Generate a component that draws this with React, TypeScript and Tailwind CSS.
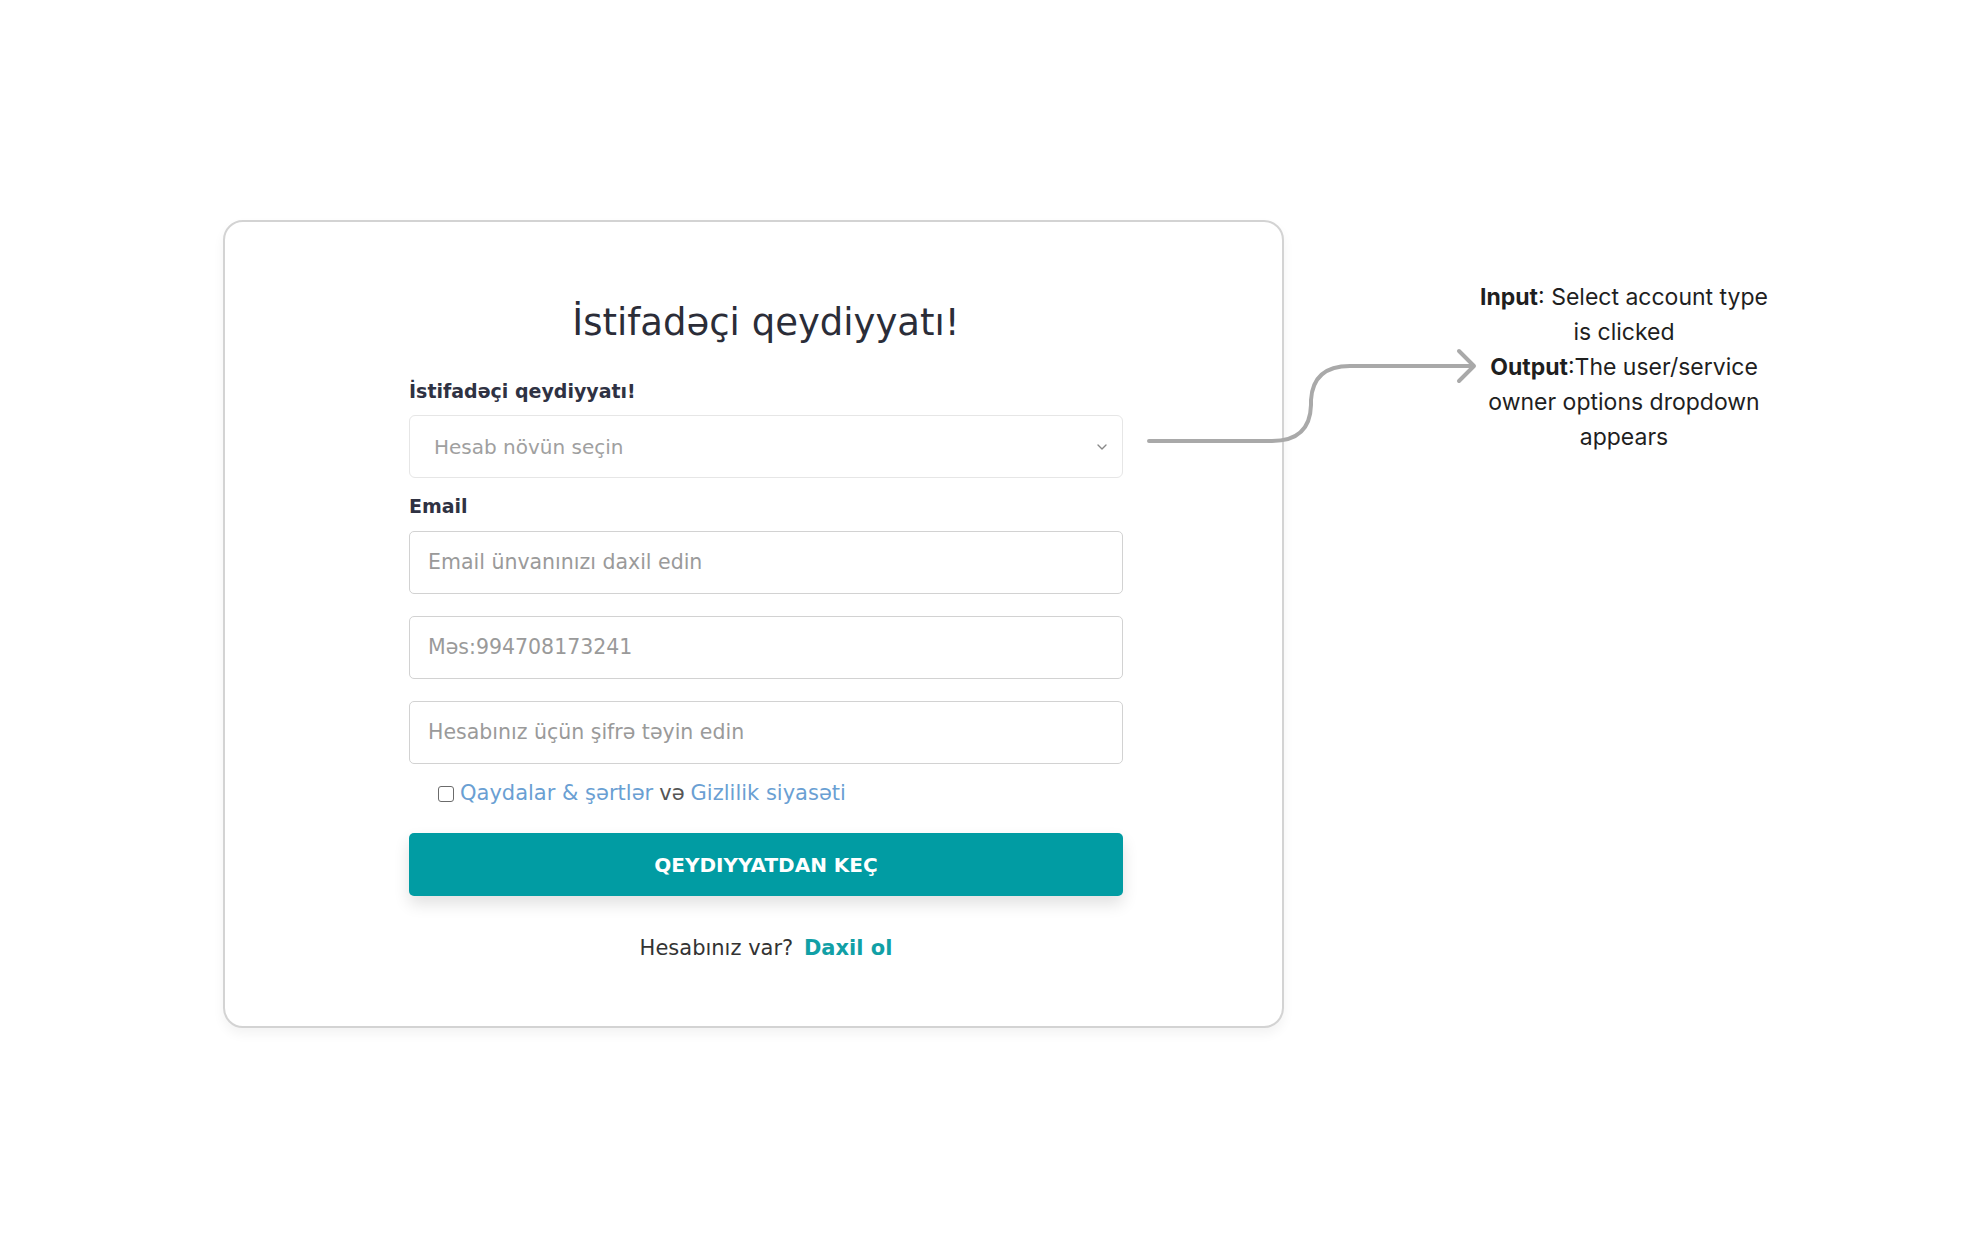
import { ChevronDown } from "lucide-react";

function Field({ placeholder }: { placeholder: string }) {
  return (
    <div className="mt-[22px] h-[63px] w-full rounded-[5px] border border-[#d2d2d2] bg-white flex items-center px-[18px] text-[20.5px] text-[#9a9a9a]">
      {placeholder}
    </div>
  );
}

export default function App() {
  return (
    <div className="relative w-full h-[1254px] bg-white font-['DejaVu_Sans',sans-serif]">
      <div className="flex items-start pl-[223px] pt-[220px]">
        {/* Registration card */}
        <div className="w-[1061px] h-[808px] shrink-0 rounded-[20px] border-2 border-[#d3d3d3] bg-white shadow-[0_6px_12px_rgba(0,0,0,0.05)] pl-[184px] pt-[77px]">
          <div className="w-[714px] flex flex-col">
            <h1 className="text-center text-[37px] leading-[48px] text-[#2b2d38]">
              İstifadəçi qeydiyyatı!
            </h1>

            <label className="mt-[32px] text-[19px] leading-[24px] font-semibold text-[#2f3243]">
              İstifadəçi qeydiyyatı!
            </label>
            <div className="mt-[12px] h-[63px] w-full rounded-[6px] border border-[#e6e6e6] flex items-center justify-between pl-[24px] pr-[12px] text-[20px] text-[#a0a0a0]">
              <span>Hesab növün seçin</span>
              <ChevronDown className="w-4 h-4 text-[#888]" strokeWidth={2} />
            </div>

            <label className="mt-[16px] text-[19px] leading-[24px] font-semibold text-[#2f3243]">
              Email
            </label>
            <div className="mt-[13px] h-[63px] w-full rounded-[5px] border border-[#d2d2d2] bg-white flex items-center px-[18px] text-[20.5px] text-[#9a9a9a]">
              Email ünvanınızı daxil edin
            </div>
            <Field placeholder="Məs:994708173241" />
            <Field placeholder="Hesabınız üçün şifrə təyin edin" />

            <div className="mt-[18px] h-[24px] flex items-center gap-[6px] pl-[29px] text-[21px]">
              <span className="w-[16px] h-[16px] rounded-[3px] border-[1.5px] border-[#6b6b6b] bg-white" />
              <span className="text-[#6a9fd3]">Qaydalar &amp; şərtlər</span>
              <span className="text-[#555]">və</span>
              <span className="text-[#6a9fd3]">Gizlilik siyasəti</span>
            </div>

            <button className="mt-[27px] h-[63px] w-full rounded-[5px] bg-[#019ca3] text-white text-[20px] font-semibold shadow-[0_8px_16px_rgba(0,0,0,0.12)]">
              QEYDIYYATDAN KEÇ
            </button>

            <p className="mt-[40px] text-center text-[21px] leading-[24px] text-[#333]">
              Hesabınız var?{" "}
              <span className="ml-1 font-semibold text-[#11a0a6]">Daxil ol</span>
            </p>
          </div>
        </div>

        {/* Annotation */}
        <div className="ml-[160px] mt-[60px] w-[360px] text-center text-[23px] leading-[35px] text-[#1f1f1f] font-['Inter',sans-serif]">
          <div>
            <b>Input</b>: Select account type
          </div>
          <div>is clicked</div>
          <div>
            <b>Output</b>:The user/service
          </div>
          <div>owner options dropdown</div>
          <div>appears</div>
        </div>
      </div>

      {/* Connector arrow */}
      <svg className="absolute left-0 top-0 pointer-events-none" width="1980" height="1254">
        <path
          d="M1149 441 H1272 Q1310 441 1311 405 V400 Q1313 366 1350 366 H1471"
          fill="none"
          stroke="#a9a9a9"
          strokeWidth="4"
          strokeLinecap="round"
        />
        <path
          d="M1459 351 L1474 366 L1459 381"
          fill="none"
          stroke="#a9a9a9"
          strokeWidth="4"
          strokeLinecap="round"
          strokeLinejoin="round"
        />
      </svg>
    </div>
  );
}
